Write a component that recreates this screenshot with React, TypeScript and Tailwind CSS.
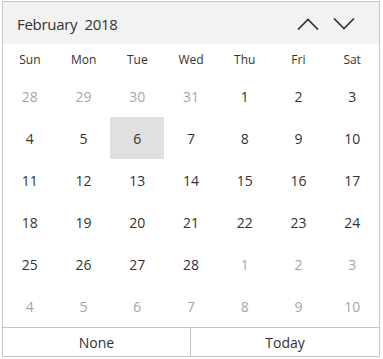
const DAYS = ["Sun", "Mon", "Tue", "Wed", "Thu", "Fri", "Sat"];

type Cell = { d: number; inMonth: boolean };

function buildCells(): Cell[] {
  const cells: Cell[] = [];
  [28, 29, 30, 31].forEach((d) => cells.push({ d, inMonth: false }));
  for (let d = 1; d <= 28; d++) cells.push({ d, inMonth: true });
  for (let d = 1; d <= 10; d++) cells.push({ d, inMonth: false });
  return cells;
}

function Chevron({ up }: { up?: boolean }) {
  return (
    <svg width="22" height="12" viewBox="0 0 22 12" fill="none" className="block">
      <path
        d={up ? "M1 11.5 L11 1.5 L21 11.5" : "M1 0.5 L11 10.5 L21 0.5"}
        stroke="#333"
        strokeWidth="1.7"
      />
    </svg>
  );
}

export default function App() {
  const cells = buildCells();
  return (
    <div className="w-[383px] h-[359px] bg-white pt-px pl-[2px] font-['Open_Sans','Noto_Sans',sans-serif] text-[#333]">
      <div className="w-[378px] h-[356px] border border-[#c6c6c6] flex flex-col">
        <div className="h-[42px] bg-[#f2f2f2] flex items-center justify-between pl-[14px] pr-[24px]">
          <span className="text-[15px] tracking-[-0.3px] whitespace-pre pt-[2px]">February  2018</span>
          <div className="flex items-center gap-[14px] pt-[2px]">
            <Chevron up />
            <Chevron />
          </div>
        </div>
        <div className="grid grid-cols-7 h-[31px] items-center text-[12px]">
          {DAYS.map((d) => (
            <div key={d} className="text-center">
              {d}
            </div>
          ))}
        </div>
        <div className="grid grid-cols-7 auto-rows-[42px] text-[14px]">
          {cells.map((c, i) => (
            <div
              key={i}
              className={
                "flex items-center justify-center " +
                (c.inMonth ? "text-[#333] " : "text-[#a6a6a6] ") +
                (c.inMonth && c.d === 6 ? "bg-[#e0e0e0]" : "")
              }
            >
              {c.d}
            </div>
          ))}
        </div>
        <div className="flex-1 flex border-t border-[#c6c6c6] text-[14px]">
          <div className="w-[188px] border-r border-[#c6c6c6] flex items-center justify-center">None</div>
          <div className="flex-1 flex items-center justify-center">Today</div>
        </div>
      </div>
    </div>
  );
}
